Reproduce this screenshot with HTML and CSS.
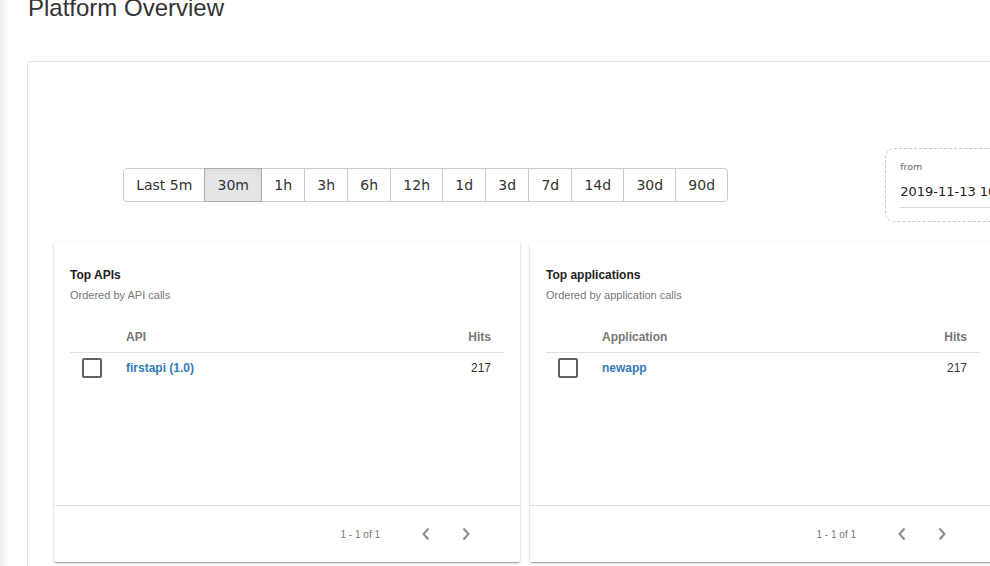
FILE: index.html
```html
<!DOCTYPE html>
<html>
<head>
<meta charset="utf-8">
<link rel="stylesheet" href="styles.css">
</head>
<body>
<div class="shell">
  <div class="edge"></div>
  <main class="main">
    <h1 class="title">Platform Overview</h1>
    <section class="board">
      <div class="toolbar">
        <div class="btn-group">
          <button class="btn">Last 5m</button>
          <button class="btn active">30m</button>
          <button class="btn">1h</button>
          <button class="btn">3h</button>
          <button class="btn">6h</button>
          <button class="btn">12h</button>
          <button class="btn">1d</button>
          <button class="btn">3d</button>
          <button class="btn">7d</button>
          <button class="btn">14d</button>
          <button class="btn">30d</button>
          <button class="btn">90d</button>
        </div>
        <div class="datebox">
          <div class="date-label">from</div>
          <div class="date-value">2019-11-13 10:30:00</div>
        </div>
      </div>
      <div class="cards">
        <div class="card">
          <div class="card-body">
            <div class="card-title">Top APIs</div>
            <div class="card-sub">Ordered by API calls</div>
            <table class="tbl">
              <thead>
                <tr><th class="c-check"></th><th class="c-name">API</th><th class="c-hits">Hits</th></tr>
              </thead>
              <tbody>
                <tr><td class="c-check"><span class="checkbox"></span></td><td class="c-name"><a class="link">firstapi (1.0)</a></td><td class="c-hits">217</td></tr>
              </tbody>
            </table>
          </div>
          <div class="card-foot">
            <span class="range">1 - 1 of 1</span>
            <span class="nav"><svg width="10" height="14" viewBox="0 0 10 14"><path d="M7.5 1.5 L2.5 7 L7.5 12.5" fill="none" stroke="#8a8a8a" stroke-width="2"/></svg></span>
            <span class="nav"><svg width="10" height="14" viewBox="0 0 10 14"><path d="M2.5 1.5 L7.5 7 L2.5 12.5" fill="none" stroke="#8a8a8a" stroke-width="2"/></svg></span>
          </div>
        </div>
        <div class="card">
          <div class="card-body">
            <div class="card-title">Top applications</div>
            <div class="card-sub">Ordered by application calls</div>
            <table class="tbl">
              <thead>
                <tr><th class="c-check"></th><th class="c-name">Application</th><th class="c-hits">Hits</th></tr>
              </thead>
              <tbody>
                <tr><td class="c-check"><span class="checkbox"></span></td><td class="c-name"><a class="link">newapp</a></td><td class="c-hits">217</td></tr>
              </tbody>
            </table>
          </div>
          <div class="card-foot">
            <span class="range">1 - 1 of 1</span>
            <span class="nav"><svg width="10" height="14" viewBox="0 0 10 14"><path d="M7.5 1.5 L2.5 7 L7.5 12.5" fill="none" stroke="#8a8a8a" stroke-width="2"/></svg></span>
            <span class="nav"><svg width="10" height="14" viewBox="0 0 10 14"><path d="M2.5 1.5 L7.5 7 L2.5 12.5" fill="none" stroke="#8a8a8a" stroke-width="2"/></svg></span>
          </div>
        </div>
      </div>
    </section>
  </main>
</div>
</body>
</html>
```
FILE: styles.css
```css
html, body {
  margin: 0;
  padding: 0;
  background: #fff;
  overflow: hidden;
  width: 990px;
  height: 566px;
}
.shell {
  display: flex;
  height: 566px;
  overflow: hidden;
}
.edge {
  flex: none;
  width: 9px;
  background: linear-gradient(to right, #ececec, #f7f7f7 45%, #ffffff);
}
.main {
  flex: none;
  padding-left: 18px;
  width: 1200px;
}
.title {
  margin: -6px 0 0 1px;
  font-family: "Liberation Sans", Arial, sans-serif;
  font-weight: normal;
  font-size: 24px;
  line-height: normal;
  color: #333;
}
.board {
  margin-top: 39px;
  border: 1px solid #e3e3e3;
  border-radius: 4px;
  width: 1100px;
  height: 600px;
  box-sizing: border-box;
  padding: 86px 0 0 26px;
}
.toolbar {
  display: flex;
  align-items: center;
  padding-left: 69px;
}
.btn-group {
  display: flex;
}
.btn {
  font-family: "DejaVu Sans", sans-serif;
  font-size: 14px;
  line-height: 20px;
  color: #333;
  background: #fff;
  border: 1px solid #ccc;
  padding: 6px 12.13px;
  margin: 0 0 0 -1px;
  border-radius: 0;
}
.btn:first-child {
  margin-left: 0;
  border-radius: 4px 0 0 4px;
}
.btn:last-child {
  border-radius: 0 4px 4px 0;
}
.btn.active {
  background: #e6e6e6;
  border-color: #adadad;
  position: relative;
  box-shadow: inset 0 3px 5px rgba(0,0,0,0.05);
}
.datebox {
  margin-left: 157px;
  border: 1px dashed #c8c8c8;
  border-radius: 9px;
  width: 200px;
  height: 74px;
  box-sizing: border-box;
  padding: 11px 14px 0 14px;
}
.date-label {
  font-family: "DejaVu Sans", sans-serif;
  font-size: 9.5px;
  color: #666;
  line-height: 14px;
}
.date-value {
  font-family: "DejaVu Sans", sans-serif;
  font-size: 13px;
  color: #222;
  line-height: 18px;
  margin-top: 9px;
  padding-bottom: 6px;
  border-bottom: 1px solid #d8d8d8;
  white-space: nowrap;
}
.cards {
  display: flex;
  gap: 10px;
  margin-top: 20px;
}
.card {
  flex: none;
  width: 466px;
  height: 320px;
  background: #fff;
  border-radius: 2px;
  box-shadow: 0 1px 3px rgba(0,0,0,0.2), 0 1px 1px rgba(0,0,0,0.14), 0 2px 1px -1px rgba(0,0,0,0.12);
  display: flex;
  flex-direction: column;
  font-family: "Liberation Sans", Arial, sans-serif;
}
.card-body {
  flex: 1;
  padding: 25px 16px 0 16px;
}
.card-title {
  font-size: 12px;
  font-weight: bold;
  color: #222;
  line-height: 16px;
}
.card-sub {
  font-size: 11px;
  color: #777;
  line-height: 14px;
  margin-top: 5px;
}
.tbl {
  width: 100%;
  border-collapse: collapse;
  margin-top: 20px;
}
.tbl th {
  font-size: 12px;
  font-weight: bold;
  color: #777;
  height: 30px;
  padding: 0;
  text-align: left;
  border-bottom: 1px solid #e0e0e0;
}
.tbl td {
  font-size: 12px;
  color: #333;
  height: 29px;
  padding: 0;
}
.c-check {
  width: 56px;
  padding-left: 12px !important;
  box-sizing: border-box;
}
.tbl .c-hits {
  text-align: right;
  padding-right: 13px;
}
.checkbox {
  display: block;
  width: 16px;
  height: 16px;
  border: 2px solid #616161;
  border-radius: 2px;
  margin-top: 1px;
}
.link {
  color: #337ab7;
  font-weight: bold;
  text-decoration: none;
}
.card-foot {
  height: 56px;
  border-top: 1px solid #e0e0e0;
  display: flex;
  align-items: center;
  justify-content: flex-end;
  padding-right: 34px;
}
.range {
  font-size: 10px;
  color: #777;
  margin-right: 26px;
}
.nav {
  width: 40px;
  height: 40px;
  display: flex;
  align-items: center;
  justify-content: center;
}
```
